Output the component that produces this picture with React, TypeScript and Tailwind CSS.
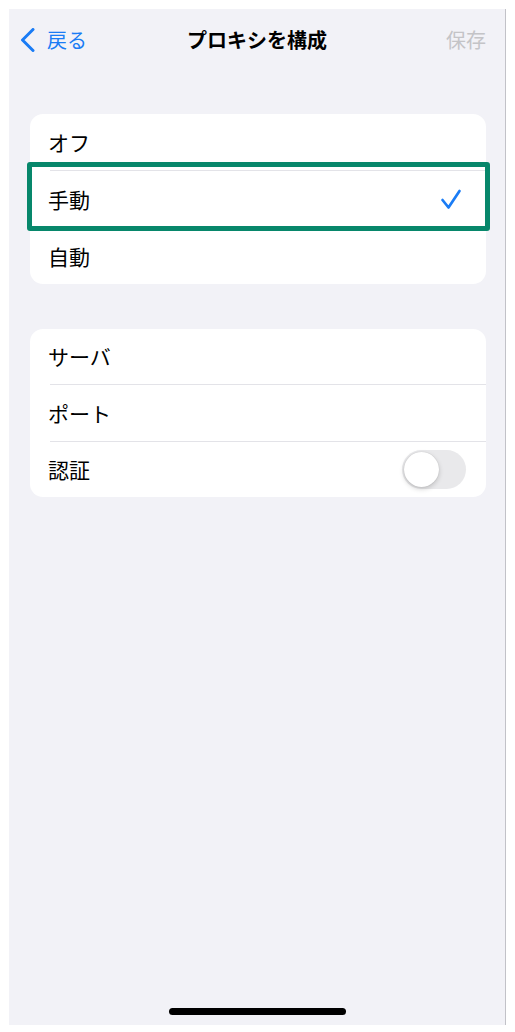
import { FC, ReactNode } from "react";

const font = { fontFamily: '"Noto Sans CJK JP", "Noto Sans", sans-serif' };

const Row: FC<{ children: ReactNode; h: string; divider?: boolean; right?: ReactNode }> = ({
  children,
  h,
  divider,
  right,
}) => (
  <div className={`flex pl-[20px] ${h}`}>
    <div
      className={`flex flex-1 items-center pr-[20px] ${
        divider ? "border-b border-[#e3e3e8]" : ""
      }`}
    >
      <span className="-ml-[2px] flex-1 text-[21px] leading-none text-black">{children}</span>
      {right}
    </div>
  </div>
);

const Check = () => (
  <svg width="22" height="22" viewBox="0 0 22 22" className="mr-[4px] mt-[-1px]">
    <path
      d="M2.5 12 L8.5 19.5 L19.5 3"
      fill="none"
      stroke="#1a7cf5"
      strokeWidth="2.7"
      strokeLinecap="round"
      strokeLinejoin="round"
    />
  </svg>
);

const Toggle = () => (
  <div className="relative h-[39px] w-[64px] rounded-full bg-[#e9e9eb]">
    <div className="absolute left-[2px] top-[2px] h-[35px] w-[35px] rounded-full bg-white shadow-[0_2px_5px_rgba(0,0,0,0.18),0_0_1px_rgba(0,0,0,0.2)]" />
  </div>
);

export default function App() {
  return (
    <div className="h-[1032px] w-[515px] bg-white pl-[9px] pt-[9px]" style={font}>
      <div className="flex h-[1016px] w-[497px] flex-col border-r border-[#c2c2c8] bg-[#f2f2f7]">
        {/* nav bar */}
        <div className="flex h-[62px] items-center px-[11px]">
          <div className="flex flex-1 items-center text-[#1a7cf5]">
            <svg width="18" height="24" viewBox="0 0 18 24">
              <path
                d="M13 1.5 L2.5 12 L13 22.5"
                fill="none"
                stroke="#1a7cf5"
                strokeWidth="3"
                strokeLinecap="round"
                strokeLinejoin="round"
              />
            </svg>
            <span className="ml-[9px] text-[20px] leading-none">戻る</span>
          </div>
          <div className="text-center text-[20px] font-bold leading-none text-black">
            プロキシを構成
          </div>
          <div className="flex flex-1 justify-end">
            <span className="mr-[8px] text-[20px] leading-none text-[#c4c4c7]">保存</span>
          </div>
        </div>

        {/* mode */}
        <div className="relative ml-[21px] mr-[19px] mt-[43px] rounded-[13px] bg-white">
          <Row h="h-[57px]" divider>
            オフ
          </Row>
          <Row h="h-[57px]" right={<Check />}>
            手動
          </Row>
          <Row h="h-[56px]">自動</Row>
          <div className="absolute left-[-3px] top-[48px] h-[69px] w-[463px] rounded-[3px] border-[5px] border-[#07876b]" />
        </div>

        {/* server */}
        <div className="ml-[21px] mr-[19px] mt-[45px] rounded-[13px] bg-white">
          <Row h="h-[56px]" divider>
            サーバ
          </Row>
          <Row h="h-[57px]" divider>
            ポート
          </Row>
          <Row h="h-[55px]" right={<Toggle />}>
            認証
          </Row>
        </div>

        <div className="mx-auto mb-[10px] mt-auto h-[7px] w-[177px] rounded-full bg-black" />
      </div>
    </div>
  );
}
